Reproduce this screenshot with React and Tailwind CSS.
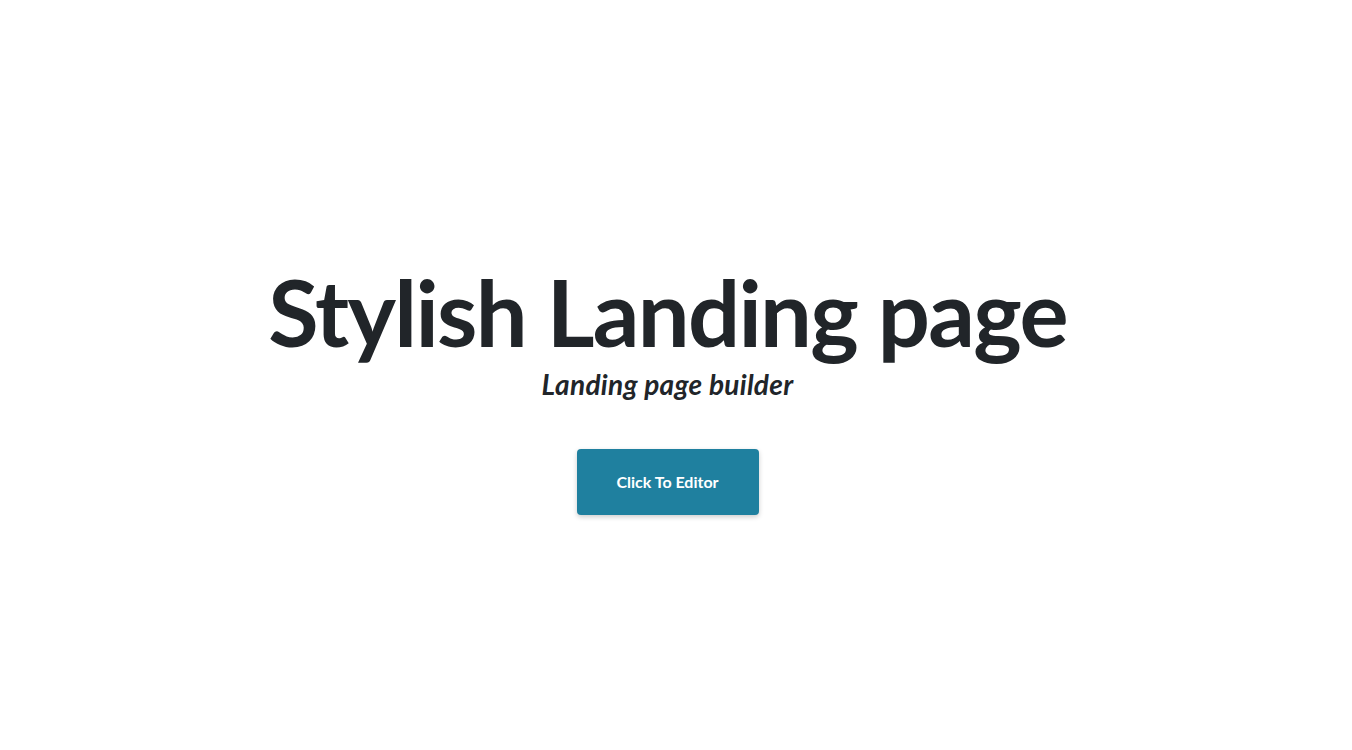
export default function App() {
  return (
    <div className="min-h-screen w-full bg-white pr-[17px] font-['Lato','Open_Sans',sans-serif] text-[#212529]">
      <div className="flex flex-col items-center pt-[266px]">
        <h1 className="text-[92px] font-bold leading-none tracking-[-1.7px]">Stylish Landing page</h1>
        <p className="mt-[10px] text-[28px] font-bold italic leading-[1.2] tracking-[0.3px]">Landing page builder</p>
        <button className="mt-[47px] h-[66px] w-[182px] rounded-[4px] bg-[#1f809f] text-[16px] font-bold text-white shadow-[0_2px_5px_rgba(0,0,0,0.2)]">
          Click To Editor
        </button>
      </div>
    </div>
  );
}
